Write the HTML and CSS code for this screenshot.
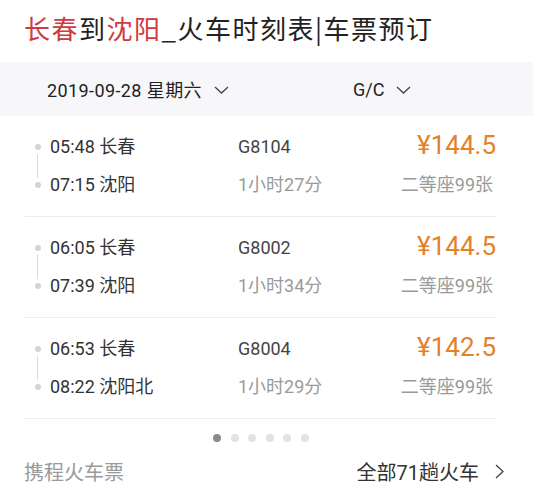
FILE: index.html
```html
<!DOCTYPE html>
<html lang="zh-CN">
<head>
  <meta charset="UTF-8">
  <title>长春到沈阳_火车时刻表|车票预订</title>
  <link rel="stylesheet" href="styles.css">
</head>
<body>
<div class="page">
  <h1 class="title"><span class="city">长春</span>到<span class="city">沈阳</span>_火车时刻表|车票预订</h1>

  <div class="filter">
    <div class="filter-item date">
      <span class="date-text">2019-09-28 星期六</span>
      <svg class="chev" width="15" height="8" viewBox="0 0 15 8"><polyline points="1,1 7.5,7 14,1" fill="none" stroke="#444" stroke-width="1.3"/></svg>
    </div>
    <div class="filter-item type">
      G/C
      <svg class="chev" width="15" height="8" viewBox="0 0 15 8"><polyline points="1,1 7.5,7 14,1" fill="none" stroke="#444" stroke-width="1.3"/></svg>
    </div>
  </div>

  <div class="trains">
    <div class="train">
      <div class="timeline"><span class="dot"></span><span class="line"></span><span class="dot"></span></div>
      <div class="stops">
        <div class="stop">05:48 长春</div>
        <div class="stop">07:15 沈阳</div>
      </div>
      <div class="info">
        <div class="code">G8104</div>
        <div class="dur">1小时27分</div>
      </div>
      <div class="fare">
        <div class="price">¥144.5</div>
        <div class="seats">二等座99张</div>
      </div>
    </div>

    <div class="train">
      <div class="timeline"><span class="dot"></span><span class="line"></span><span class="dot"></span></div>
      <div class="stops">
        <div class="stop">06:05 长春</div>
        <div class="stop">07:39 沈阳</div>
      </div>
      <div class="info">
        <div class="code">G8002</div>
        <div class="dur">1小时34分</div>
      </div>
      <div class="fare">
        <div class="price">¥144.5</div>
        <div class="seats">二等座99张</div>
      </div>
    </div>

    <div class="train">
      <div class="timeline"><span class="dot"></span><span class="line"></span><span class="dot"></span></div>
      <div class="stops">
        <div class="stop">06:53 长春</div>
        <div class="stop">08:22 沈阳北</div>
      </div>
      <div class="info">
        <div class="code">G8004</div>
        <div class="dur">1小时29分</div>
      </div>
      <div class="fare">
        <div class="price">¥142.5</div>
        <div class="seats">二等座99张</div>
      </div>
    </div>
  </div>

  <div class="pager">
    <span class="pdot active"></span>
    <span class="pdot"></span>
    <span class="pdot"></span>
    <span class="pdot"></span>
    <span class="pdot"></span>
    <span class="pdot"></span>
  </div>

  <div class="footer">
    <span class="brand">携程火车票</span>
    <span class="more">全部71趟火车
      <svg class="arrow" width="9" height="15" viewBox="0 0 9 15"><polyline points="1,1 8,7.5 1,14" fill="none" stroke="#444" stroke-width="1.3"/></svg>
    </span>
  </div>
</div>
</body>
</html>
```

FILE: styles.css
```css
body {
  margin: 0;
  background: #fff;
  font-family: Roboto, "Noto Sans CJK SC", sans-serif;
  color: #333;
}
.page {
  width: 533px;
}
.title {
  margin: 0;
  height: 62px;
  padding-left: 24px;
  font-size: 26px;
  font-weight: normal;
  letter-spacing: 1.5px;
  line-height: 56px;
  color: #222;
  font-family: "Noto Sans CJK SC", sans-serif;
}
.city {
  color: #cf3a3f;
}
.filter {
  height: 54px;
  background: #f7f7f9;
  display: flex;
  align-items: center;
  font-size: 18px;
  color: #222;
}
.filter-item {
  display: flex;
  align-items: center;
  gap: 12px;
}
.date {
  padding-left: 47px;
  width: 306px;
}
.date-text {
  letter-spacing: 0.4px;
}
.chev {
  margin-top: 1px;
}
.trains {
  margin: 0 37px 0 25px;
}
.train {
  display: flex;
  padding: 12px 0;
  border-bottom: 1px solid #ececec;
}
.timeline {
  width: 25px;
  display: flex;
  flex-direction: column;
  align-items: center;
  padding: 16px 0;
  box-sizing: border-box;
}
.dot {
  width: 6px;
  height: 6px;
  border-radius: 50%;
  background: #d4d4d4;
}
.line {
  flex: 1;
  width: 1px;
  margin: 4px 0;
  background: #dcdcdc;
}
.stops, .info, .fare {
  font-size: 18px;
  line-height: 38px;
}
.stops {
  width: 188px;
  color: #333;
}
.info .code {
  color: #444;
}
.info .dur {
  color: #9a9a9a;
}
.fare {
  margin-left: auto;
  text-align: right;
}
.price {
  font-size: 26px;
  color: #e4812b;
  line-height: 34px;
  margin-bottom: 4px;
}
.seats {
  color: #9a9a9a;
  margin-right: 3px;
}
.pager {
  display: flex;
  gap: 9.6px;
  padding: 15px 0 0 213px;
  height: 8px;
}
.pdot {
  width: 8px;
  height: 8px;
  border-radius: 50%;
  background: #e2e2e2;
}
.pdot.active {
  background: #8a8a8a;
}
.footer {
  display: flex;
  justify-content: space-between;
  align-items: center;
  padding: 0 29px 0 24px;
  height: 58px;
  font-size: 20px;
}
.brand {
  color: #9a9a9a;
}
.more {
  color: #333;
  display: flex;
  align-items: center;
  gap: 16px;
}
```
